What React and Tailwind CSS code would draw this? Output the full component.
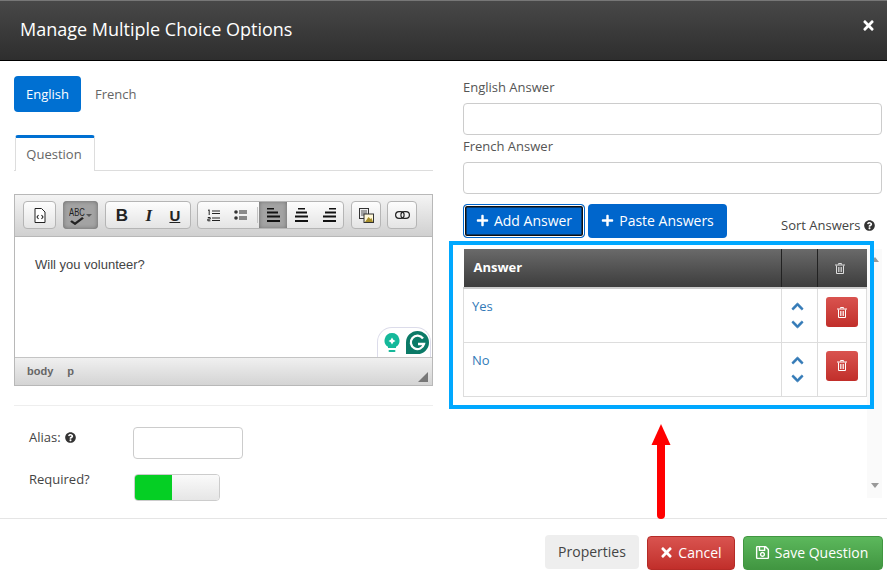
import React from "react";
import { FaTimes, FaQuestionCircle, FaPlus, FaRegSave, FaChevronUp, FaChevronDown } from "react-icons/fa";

const ToolGroup = ({ className = "", children }) => (
  <div className={`flex h-[28px] items-center rounded-[4px] border border-[#b5b5b5] bg-gradient-to-b from-[#fdfdfd] to-[#e4e4e4] ${className}`}>
    {children}
  </div>
);

const ActiveTool = ({ className = "", children }) => (
  <div className={`flex h-[28px] items-center justify-center bg-[#a3a3a3] shadow-[inset_0_0_4px_#666] ${className}`}>{children}</div>
);

const AlignIcon = ({ kind }) => {
  const short = kind === "left" ? 0 : kind === "center" ? 3 : 6;
  const mid = kind === "left" ? 0 : kind === "center" ? 1 : 2;
  return (
    <svg width="13" height="14" viewBox="0 0 13 14">
      <rect x={short} y="0" width="7" height="1.5" fill="#111" />
      <rect x={mid} y="3.5" width="11" height="2" fill="#111" />
      <rect x="0" y="7.500" width="13" height="2" fill="#111" />
      <rect x="0" y="12" width="13" height="2" fill="#111" />
    </svg>
  );
};

const TrashIcon = ({ className = "" }) => (
  <svg className={className} width="10" height="11" viewBox="0 0 10 11">
    <path d="M3.500 1.500V.5h3v1M0 2h10" fill="none" stroke="currentColor" />
    <path d="M1.500 2.500v8h7v-8" fill="none" stroke="currentColor" />
    <path d="M3.500 4v5M5 4v5M6.500 4v5" stroke="currentColor" strokeWidth=".8" />
  </svg>
);

function Toolbar() {
  return (
    <div className="flex h-[42px] items-center border-b border-[#b8b8b8] bg-gradient-to-b from-[#f4f4f4] to-[#d0d0d0] pl-[8px] pb-[1px]">
      <ToolGroup className="w-[33px] justify-center">
        <svg width="12" height="15" viewBox="0 0 12 15">
          <path d="M1 .5h6.500L11 4v10.500H1z" fill="#fff" stroke="#222" />
          <path d="M4.500 7 3 9l1.500 2M7.500 7 9 9l-1.500 2" fill="none" stroke="#222" strokeWidth="1.100" />
        </svg>
      </ToolGroup>
      <ActiveTool className="ml-[7px] w-[35px] gap-[2px] rounded-[4px]">
        <div className="relative h-[18px] w-[15px]">
          <span className="absolute left-0 top-[0px] origin-left scale-x-[0.7] text-[11px] leading-[12px] text-[#222] font-['Liberation_Sans',sans-serif]">ABC</span>
          <svg className="absolute left-[1px] top-[11px]" width="14" height="8" viewBox="0 0 14 10" preserveAspectRatio="none">
            <path d="M1 5l4 3.500L13 1" fill="none" stroke="#222" strokeWidth="2.500" />
          </svg>
        </div>
        <div className="h-0 w-0 border-x-[3px] border-t-[3px] border-x-transparent border-t-[#555]" />
      </ActiveTool>
      <ToolGroup className="ml-[7px] w-[86px] justify-around px-[1px] text-[#222] font-['Liberation_Sans',sans-serif] text-[17px] leading-none">
        <span className="font-bold">B</span>
        <span className="font-bold italic font-['Liberation_Serif',serif]">I</span>
        <span className="font-bold underline text-[15px]">U</span>
      </ToolGroup>
      <ToolGroup className="ml-[6px] w-[147px] overflow-hidden">
        <div className="flex w-[29px] justify-center pl-[1px]">
          <svg width="13" height="13" viewBox="0 0 13 13">
            <path d="M1 1.500 2.200.8V6M.8 8.500h2.400v1.600H.8v1.700h2.600M5 2h8M5 4.500h8M5 9h8M5 11.500h8" fill="none" stroke="#222" />
          </svg>
        </div>
        <div className="flex w-[27px] justify-center">
          <svg width="13" height="12" viewBox="0 0 13 12">
            <circle cx="2" cy="3" r="1.800" fill="#333" />
            <circle cx="2" cy="9" r="1.800" fill="#333" />
            <path d="M5 2h8M5 4h8M5 8h8M5 10h8" stroke="#222" />
          </svg>
        </div>
        <div className="ml-[3px] h-[16px] w-px bg-[#c4c4c4]" />
        <ActiveTool className="ml-[1px] w-[28px]"><AlignIcon kind="left" /></ActiveTool>
        <div className="flex w-[28px] justify-center"><AlignIcon kind="center" /></div>
        <div className="flex w-[28px] justify-center"><AlignIcon kind="right" /></div>
      </ToolGroup>
      <ToolGroup className="ml-[7px] w-[30px] justify-center">
        <svg width="15" height="15" viewBox="0 0 15 15">
          <rect x=".5" y=".5" width="9" height="10" fill="#eee" stroke="#333" />
          <path d="M2 3h6M2 5h6M2 7h3" stroke="#555" />
          <rect x="5" y="6" width="9.500" height="8.500" fill="#fff8d8" stroke="#333" />
          <path d="M6 14l3.500-5 2 2 1-1 1.500 4z" fill="#a8902c" />
        </svg>
      </ToolGroup>
      <ToolGroup className="ml-[6px] w-[30px] justify-center">
        <svg width="15" height="8" viewBox="0 0 15 8">
          <rect x=".6" y=".6" width="8.500" height="6.800" rx="3.400" fill="none" stroke="#222" strokeWidth="1.200" />
          <rect x="5.900" y=".6" width="8.500" height="6.800" rx="3.400" fill="none" stroke="#222" strokeWidth="1.200" />
        </svg>
      </ToolGroup>
    </div>
  );
}

function GrammarlyBadge() {
  return (
    <div className="absolute bottom-0 right-[1px] flex h-[30px] w-[54px] items-center gap-[6px] rounded-tl-[15px] rounded-tr-[15px] border border-b-0 border-[#dcdcea] bg-white pl-[6px]">
      <svg width="16" height="20" viewBox="0 0 16 20">
        <path d="M8 0a7.500 7.500 0 0 0-4 13.800V15h8v-1.200A7.500 7.500 0 0 0 8 0z" fill="#15b89a" />
        <path d="M8 4.500 9.300 6.700 11.500 8 9.300 9.300 8 11.500 6.700 9.300 4.500 8 6.700 6.700z" fill="#fff" />
        <rect x="4.500" y="17" width="7" height="2" rx="1" fill="#15b89a" />
      </svg>
      <svg width="23" height="23" viewBox="0 0 23 23">
        <path d="M11.500 0A11.500 11.500 0 0 1 11.500 23H0V11.500A11.500 11.500 0 0 1 11.500 0z" fill="#0b7a67" />
        <path d="M17 7.500A6.700 6.700 0 1 0 18 13h-6" fill="none" stroke="#fff" strokeWidth="2.300" />
      </svg>
    </div>
  );
}

function Editor() {
  return (
    <div className="mt-[23px] border border-[#b8b8b8]">
      <Toolbar />
      <div className="relative h-[120px] bg-white pl-[20px] pt-[20px] text-[13px] leading-[16px] text-[#444] font-['Liberation_Sans',sans-serif]">
        Will you volunteer?
        <GrammarlyBadge />
      </div>
      <div className="relative flex h-[28px] items-center gap-[14px] border-t border-[#c4c4c4] bg-gradient-to-b from-[#f0f0f0] to-[#d4d4d4] pl-[12px] text-[11px] font-bold text-[#666] font-['Liberation_Sans',sans-serif]">
        <span>body</span>
        <span>p</span>
        <div className="absolute bottom-[3px] right-[4px] h-0 w-0 border-b-[10px] border-l-[10px] border-b-[#777] border-l-transparent" />
      </div>
    </div>
  );
}

function LeftColumn() {
  return (
    <div className="w-[419px] shrink-0">
      <div className="flex items-center">
        <div className="flex h-[36px] w-[67px] items-center justify-center rounded-[4px] bg-[#0070d2] pt-[1px] text-white">English</div>
        <span className="ml-[14px] pt-[1px] text-[#666]">French</span>
      </div>
      <div className="mt-[23px] flex h-[36px] border-b border-[#ddd]">
        <div className="ml-[1px] flex h-[36px] w-[80px] items-center justify-center rounded-t-[3px] border-x border-t-[3px] border-x-[#ddd] border-t-[#0070d2] bg-white pr-[2px] text-[#666]">Question</div>
      </div>
      <Editor />
      <div className="mt-[19px] border-t border-[#eee]" />
      <div className="mt-[21px] flex pl-[15px]">
        <div className="flex h-[20px] w-[104px] items-center gap-[4px] pt-[1px] text-[#444]">
          Alias: <FaQuestionCircle className="text-[11px] text-[#333]" />
        </div>
        <div className="h-[32px] w-[110px] rounded-[4px] border border-[#ccc] bg-white" />
      </div>
      <div className="mt-[15px] flex pl-[15px]">
        <div className="-mt-[2px] w-[105px] leading-[14px] text-[#444]">Required?</div>
        <div className="flex h-[27px] w-[86px] overflow-hidden rounded-[4px] border border-[#ccc]">
          <div className="w-[37px] bg-[#05cf24]" />
          <div className="flex-1 bg-gradient-to-b from-[#fafafa] to-[#e6e6e6]" />
        </div>
      </div>
    </div>
  );
}

function AnswerRow({ label }) {
  return (
    <tr className="h-[54px]">
      <td className="border border-[#ddd] px-[8px] pt-[8px] align-top text-[13px] leading-[18px] text-[#337ab7]">{label}</td>
      <td className="border border-[#ddd] align-top">
        <div className="flex flex-col items-center gap-[5px] pr-[4px] pt-[11px] text-[13px] text-[#337ab7] [&_path]:stroke-[#337ab7] [&_path]:stroke-[30px]">
          <FaChevronUp />
          <FaChevronDown />
        </div>
      </td>
      <td className="border border-[#ddd] align-top">
        <div className="mx-auto mt-[8px] flex h-[30px] w-[32px] items-center justify-center rounded-[3px] bg-gradient-to-b from-[#d9534f] to-[#c12e2a] pr-[1px] text-white">
          <TrashIcon />
        </div>
      </td>
    </tr>
  );
}

function AnswersTable() {
  return (
    <table className="w-[404px] table-fixed self-start border-collapse">
      <thead>
        <tr className="h-[39px] bg-gradient-to-b from-[#6a6a6a] to-[#3c3c3c] text-white">
          <th className="w-[318px] border-b-2 border-b-[#ccc] px-[10px] text-left text-[13px] font-bold">Answer</th>
          <th className="w-[36px] border-x border-b-2 border-x-[#222] border-b-[#ccc]" />
          <th className="border-b-2 border-b-[#ccc]">
            <TrashIcon className="mx-auto -translate-x-[2px] text-[#ddd]" />
          </th>
        </tr>
      </thead>
      <tbody>
        <AnswerRow label="Yes" />
        <AnswerRow label="No" />
      </tbody>
    </table>
  );
}

function RightColumn() {
  return (
    <div className="ml-[30px] w-[419px] shrink-0">
      <div className="mt-[2px] h-[25px] leading-[18px] text-[#555]">English Answer</div>
      <div className="h-[32px] rounded-[4px] border border-[#ccc] bg-white" />
      <div className="mt-[2px] h-[25px] leading-[18px] text-[#555]">French Answer</div>
      <div className="h-[32px] rounded-[4px] border border-[#ccc] bg-white" />
      <div className="mt-[10px] flex h-[34px] items-stretch text-[14px] text-white">
        <div className="flex w-[122px] items-center justify-center gap-[5px] rounded-[4px] border border-[#0066cc] bg-[#0066cc] pb-[1px] shadow-[inset_0_0_0_1px_#fff,inset_0_0_0_2.5px_#111]">
          <FaPlus className="text-[13px]" /> Add Answer
        </div>
        <div className="ml-[3px] flex w-[139px] items-center justify-center gap-[5px] rounded-[4px] bg-[#0066cc] pb-[1px]">
          <FaPlus className="text-[13px]" /> Paste Answers
        </div>
        <div className="ml-[54px] flex items-center gap-[3px] pt-[9px] text-[13px] text-[#444]">
          Sort Answers <FaQuestionCircle className="text-[11px] text-[#333]" />
        </div>
      </div>
      <div className="mt-[11px] flex">
        <AnswersTable />
        <div className="flex h-[249px] w-[15px] flex-col items-center justify-between bg-[#fafafa] pb-[10px] pt-[8px]">
          <div className="h-0 w-0 border-x-[4px] border-b-[5px] border-x-transparent border-b-[#999]" />
          <div className="h-0 w-0 border-x-[4px] border-t-[5px] border-x-transparent border-t-[#999]" />
        </div>
      </div>
    </div>
  );
}

function Annotations() {
  return (
    <>
      <div className="absolute left-[449px] top-[241px] h-[168px] w-[425px] border-[4px] border-[#00a8ff]" />
      <svg className="absolute left-[650px] top-[424px]" width="22" height="96" viewBox="0 0 22 96">
        <path d="M11 0 20.500 21H1.500z" fill="#ff0000" />
        <path d="M11 20v71" stroke="#ff0000" strokeWidth="8" strokeLinecap="round" />
      </svg>
    </>
  );
}

export default function App() {
  return (
    <div className="relative flex h-[582px] w-[887px] flex-col overflow-hidden bg-white text-[13px] font-['Open_Sans',sans-serif]">
      <div className="flex h-[61px] shrink-0 items-center justify-between border-t border-b border-t-[#777] border-b-black bg-gradient-to-b from-[#484848] to-[#2e2e2e] pb-[4px] pl-[20px] pr-[11px] text-white">
        <h1 className="text-[18px] leading-[24px]">Manage Multiple Choice Options</h1>
        <FaTimes className="mb-[7px] text-[15px]" />
      </div>
      <div className="flex h-[457px] shrink-0 pl-[14px] pt-[15px]">
        <LeftColumn />
        <RightColumn />
      </div>
      <div className="flex flex-1 items-start justify-end border-t border-[#e5e5e5] pr-[4px] pt-[16px] text-[14px]">
        <div className="flex h-[34px] w-[94px] items-center justify-center rounded-[4px] bg-[#eee] pb-[1px] text-[#444]">Properties</div>
        <div className="ml-[8px] mt-[1px] flex h-[34px] w-[88px] items-center justify-center gap-[4px] rounded-[4px] border border-[#b52b27] bg-gradient-to-b from-[#d9534f] to-[#c12e2a] pb-[1px] pr-[1px] text-white">
          <FaTimes className="text-[15px]" /> Cancel
        </div>
        <div className="ml-[8px] mt-[1px] flex h-[34px] w-[140px] items-center justify-center gap-[5px] rounded-[4px] border border-[#419641] bg-gradient-to-b from-[#5cb85c] to-[#419641] pb-[1px] pr-[3px] text-white">
          <FaRegSave className="text-[15px]" /> Save Question
        </div>
      </div>
      <Annotations />
    </div>
  );
}
